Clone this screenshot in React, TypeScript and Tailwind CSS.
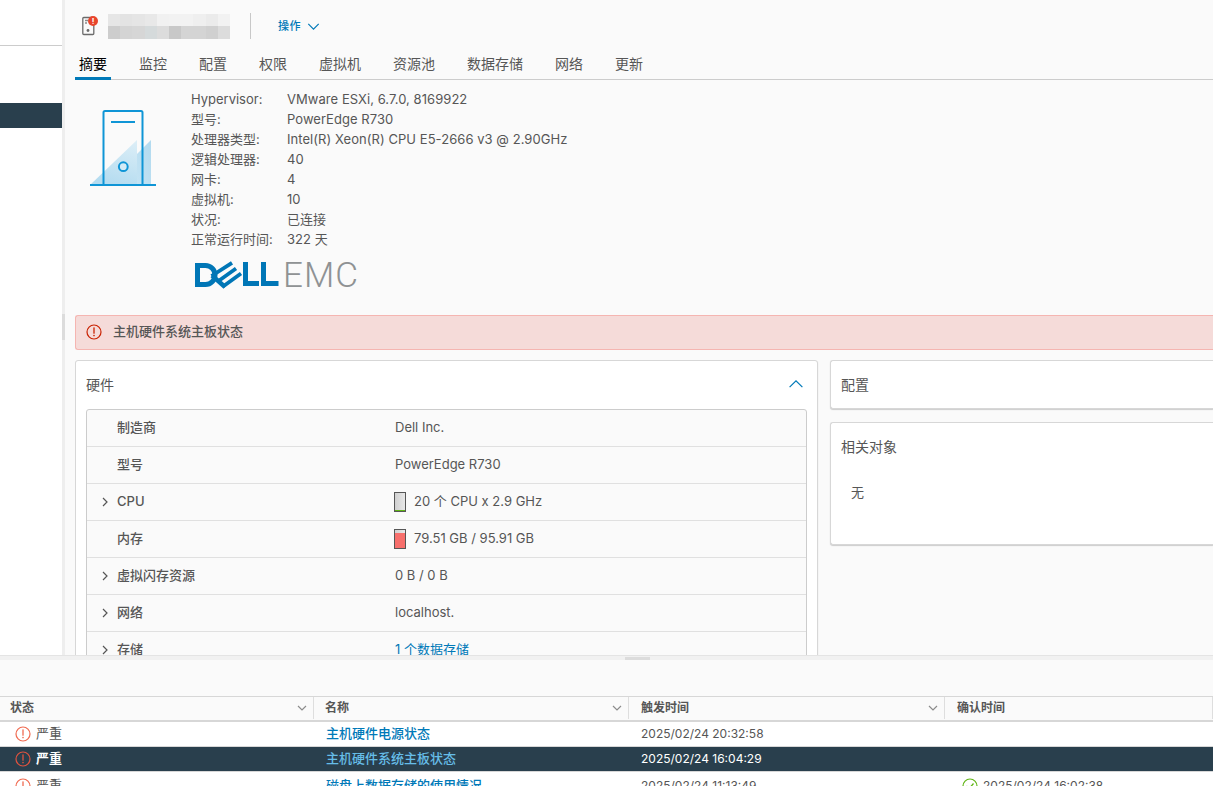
import React from 'react';

const latin = "font-['Inter','Noto_Sans_CJK_SC',sans-serif]";

const tabs = ['摘要', '监控', '配置', '权限', '虚拟机', '资源池', '数据存储', '网络', '更新'];

const summary = [
  ['Hypervisor:', 'VMware ESXi, 6.7.0, 8169922'],
  ['型号:', 'PowerEdge R730'],
  ['处理器类型:', 'Intel(R) Xeon(R) CPU E5-2666 v3 @ 2.90GHz'],
  ['逻辑处理器:', '40'],
  ['网卡:', '4'],
  ['虚拟机:', '10'],
  ['状况:', '已连接'],
  ['正常运行时间:', '322 天'],
];

// Blurred-out host name in the header
const mosaic = [
  ['#e6e6e6', '#e3e3e3', '#e5e5e5', '#e8e8e8', '#f1f1f1', '#f2f2f2', '#f2f2f2', '#efefef', '#ebebeb', '#f2f2f2'],
  ['#cdcdcd', '#d4d4d4', '#d6d6d6', '#d5dadb', '#dcdcdc', '#c8c8c8', '#d4d4d4', '#d4d4d4', '#d0d0d0', '#dcdcdc'],
];

const ErrorIcon = ({ size = 16, color = '#c92100' }: { size?: number; color?: string }) => (
  <svg width={size} height={size} viewBox="0 0 16 16" fill="none" className="shrink-0">
    <circle cx="8" cy="8" r="7" stroke={color} strokeWidth="1.2" />
    <path d="M8 3.8v5.4" stroke={color} strokeWidth="1.3" strokeLinecap="round" />
    <circle cx="8" cy="11.6" r="0.8" fill={color} />
  </svg>
);

const Chevron = ({ dir = 'right', color = '#565656', size = 10 }: { dir?: string; color?: string; size?: number }) => {
  const d = dir === 'right' ? 'M3 1l4 4-4 4' : dir === 'down' ? 'M1 3l4 4 4-4' : 'M1 7l4-4 4 4';
  return (
    <svg width={size} height={size} viewBox="0 0 10 10" fill="none" className="shrink-0">
      <path d={d} stroke={color} strokeWidth={12 / size} />
    </svg>
  );
};

const HostIcon = () => (
  <svg width="66" height="76" viewBox="0 0 66 76" fill="none">
    <defs>
      <linearGradient id="fade" x1="0.9" y1="0" x2="0.6" y2="1">
        <stop offset="0" stopColor="#dcEEf7" />
        <stop offset="1" stopColor="#b5dcf0" />
      </linearGradient>
      <linearGradient id="fade2" x1="1" y1="0" x2="0" y2="1">
        <stop offset="0" stopColor="#b2daef" />
        <stop offset="1" stopColor="#c4e3f3" />
      </linearGradient>
    </defs>
    <path d="M0 75 L47 30 V75 Z" fill="url(#fade)" />
    <path d="M47 44 L61 30 V75 H47 Z" fill="url(#fade2)" />
    <path d="M13.5 75V2.5a1.5 1.5 0 0 1 1.5-1.5h36a1.5 1.5 0 0 1 1.5 1.5V75" stroke="#0f95d6" strokeWidth="2" />
    <path d="M21 12h24" stroke="#0f95d6" strokeWidth="2" />
    <circle cx="33.3" cy="56.7" r="4.4" stroke="#0f95d6" strokeWidth="2" fill="#d4ebf6" />
    <path d="M0 75h66" stroke="#0f95d6" strokeWidth="2" />
  </svg>
);

const DellLogo = () => (
  <svg width="84" height="29" viewBox="0 0 84 29" fill="none" className="shrink-0">
    <g stroke="#0076b6" strokeWidth="5">
      <path d="M2.5 4.5h8a9.5 9.5 0 0 1 0 19h-8z" />
      <path d="M17 14.5 L30 26" strokeWidth="4.4" />
      <path d="M16.5 15 L37 1.8 M23.5 20 L41 7.5 M28 25.5 L46 12.5" strokeWidth="3.8" />
      <path d="M50.5 1V22.5H64" />
      <path d="M68.5 1V22.5H83.5" />
    </g>
  </svg>
);

const Bar = ({ fill, green }: { fill: number; green?: boolean }) => (
  <div className="-ml-px mr-2 flex h-[20px] w-[12px] shrink-0 flex-col justify-end border border-[#565656] bg-gradient-to-r from-[#d0d0d0] to-[#e8e8e8]">
    {green ? <div className="h-[1px] bg-[#60b515]" /> : <div className="bg-[#f76f6c]" style={{ height: fill }} />}
  </div>
);

const rows: { label: string; value: React.ReactNode; expand?: boolean }[] = [
  { label: '制造商', value: 'Dell Inc.' },
  { label: '型号', value: 'PowerEdge R730' },
  { label: 'CPU', expand: true, value: <><Bar fill={1} green /><span>20 个 CPU x 2.9 GHz</span></> },
  { label: '内存', value: <><Bar fill={15} /><span>79.51 GB / 95.91 GB</span></> },
  { label: '虚拟闪存资源', expand: true, value: '0 B / 0 B' },
  { label: '网络', expand: true, value: 'localhost.' },
  { label: '存储', expand: true, value: <span className="text-[#0079b8]">1 个数据存储</span> },
];

const columns = [
  { title: '状态', width: 'w-[314px] pl-[10px]' },
  { title: '名称', width: 'w-[315px] pl-[11px]' },
  { title: '触发时间', width: 'w-[316px] pl-[12px]' },
  { title: '确认时间', width: 'flex-1 pl-[12px]' },
];

const alarms = [
  { name: '主机硬件电源状态', time: '2025/02/24 20:32:58', ack: '' },
  { name: '主机硬件系统主板状态', time: '2025/02/24 16:04:29', ack: '', selected: true },
  { name: '磁盘上数据存储的使用情况', time: '2025/02/24 11:13:49', ack: '2025/02/24 16:02:38' },
];

export default function App() {
  return (
    <div className={`flex h-[786px] w-[1213px] flex-col overflow-hidden bg-white text-[13px] text-[#565656] ${latin}`}>
      <div className="flex h-[655px] shrink-0">
        {/* Left tree */}
        <aside className="w-[62px] shrink-0 bg-white">
          <div className="h-[46px] border-b border-[#ccc]" />
          <div className="mt-[57px] h-[25px] bg-[#293f4d]" />
        </aside>
        <div className="flex w-[13px] shrink-0 bg-[#fafafa]">
          <div className="w-[3px] bg-[#eeeeee]">
            <div className="mt-[314px] h-[26px] bg-[#dcdcdc]" />
          </div>
        </div>

        {/* Main pane */}
        <main className="min-w-0 flex-1 overflow-hidden bg-[#fafafa]">
          <div className="flex h-[52px] items-center pl-[7px]">
            <span className="relative flex h-[20px] w-[17px] shrink-0">
              <svg width="13" height="20" viewBox="0 0 13 20" fill="none">
                <rect x="0.8" y="1.5" width="11" height="17" rx="1" stroke="#6b6b6b" strokeWidth="1.3" />
                <path d="M3 4.5h3M3 7h2" stroke="#8a8a8a" strokeWidth="1.3" />
                <circle cx="6" cy="14.5" r="1.4" fill="#6b6b6b" />
              </svg>
              <span className="absolute left-[6px] top-0 h-[10px] w-[10px] rounded-full bg-[#e8452c] text-center text-[8px] font-bold leading-[10px] text-white">!</span>
            </span>
            <div className="ml-[9px] grid h-[25px] w-[122px] grid-cols-10 blur-[0.6px]">
              {mosaic.flat().map((c, i) => (
                <div key={i} style={{ backgroundColor: c }} />
              ))}
            </div>
            <div className="ml-[20px] h-[26px] w-px bg-[#c8c8c8]" />
            <span className="ml-[27px] pt-[1px] text-[11px] font-medium tracking-[0.5px] text-[#0079b8]">操作</span>
            <span className="ml-[6px] pt-[1px]"><Chevron dir="down" color="#0079b8" size={13} /></span>
          </div>

          <nav className="flex h-[28px] gap-[24px] border-b border-[#ccc] text-[14px] leading-[24px]">
            {tabs.map((t, i) => (
              <div key={t} className={`h-[28px] px-[4px] ${i === 0 ? 'border-b-[3px] border-[#0079b8] text-[#000]' : 'text-[#565656]'}`}>
                {t}
              </div>
            ))}
          </nav>

          {/* Host summary */}
          <section className="flex h-[235px] pl-[15px] pt-[9px]">
            <div className="w-[101px] shrink-0 pt-[21px]"><HostIcon /></div>
            <div>
              <div className="grid grid-cols-[96px_auto] leading-[20px]">
                {summary.map(([k, v]) => (
                  <React.Fragment key={k}>
                    <div>{k}</div>
                    <div className="tracking-[0.05px]">{v}</div>
                  </React.Fragment>
                ))}
              </div>
              <div className="mt-[12px] flex items-center pl-[4px]">
                <DellLogo />
                <span className="ml-[4px] font-['Roboto',sans-serif] text-[35px] leading-[29px] font-light tracking-[1px] text-[#8f9294]">EMC</span>
              </div>
            </div>
          </section>

          <div className="flex h-[35px] items-center gap-[11px] rounded-l-[3px] border border-r-0 border-[#f5b5b1] bg-[#f5dbd9] pb-[1px] pl-[10px] text-[13px] font-medium">
            <ErrorIcon />
            <span>主机硬件系统主板状态</span>
          </div>

          <div className="mt-[10px] flex items-start gap-[12px]">
            <section className="h-[400px] w-[743px] shrink-0 rounded-[3px] border border-[#d7d7d7] bg-white px-[10px] shadow-[0_1px_1px_#ccc]">
              <div className="flex h-[48px] items-center justify-between pb-[2px] pr-[3px] text-[14px]">
                <span>硬件</span>
                <Chevron dir="up" color="#0079b8" size={16} />
              </div>
              <div className="rounded-[3px] border border-[#ccc] bg-[#fafafa]">
                {rows.map((r) => (
                  <div key={r.label} className="flex h-[37px] items-center border-b border-[#e0e0e0]">
                    <div className={`flex w-[308px] shrink-0 items-center font-medium ${r.expand ? 'gap-[7px] pl-[13px]' : 'pl-[30px]'}`}>
                      {r.expand && <Chevron />}
                      <span>{r.label}</span>
                    </div>
                    <div className="flex items-center">{r.value}</div>
                  </div>
                ))}
              </div>
            </section>

            <div className="flex min-w-0 flex-1 flex-col gap-[13px]">
              <section className="flex h-[49px] items-center rounded-l-[3px] border border-r-0 border-[#d7d7d7] bg-white pl-[10px] text-[14px] shadow-[0_1px_1px_#ccc]">
                配置
              </section>
              <section className="h-[123px] rounded-l-[3px] border border-r-0 border-[#d7d7d7] bg-white pl-[10px] pt-[14px] shadow-[0_1px_1px_#ccc]">
                <div className="text-[14px] leading-[20px]">相关对象</div>
                <div className="mt-[25px] pl-[10px] leading-[20px]">无</div>
              </section>
            </div>
          </div>
        </main>
      </div>

      {/* Splitter */}
      <div className="flex h-[5px] shrink-0 justify-center border-t border-[#e4e4e4] bg-[#f1f1f1] pl-[62px]">
        <div className="mt-[1px] h-[3px] w-[25px] bg-[#dcdcdc]" />
      </div>

      {/* Alarm panel */}
      <div className="h-[36px] shrink-0 bg-[#fafafa]" />
      <div className="flex h-[26px] shrink-0 border-y border-b-2 border-[#d7d7d7] bg-[#fafafa] pb-[1px] text-[12px] font-bold">
        {columns.map((c) => (
          <div key={c.title} className={`flex items-center justify-between border-r border-[#dedede] pr-[6px] ${c.width}`}>
            <span>{c.title}</span>
            {c.title !== '确认时间' && <Chevron dir="down" color="#8c8c8c" size={10} />}
          </div>
        ))}
      </div>
      {alarms.map((a) => (
        <div key={a.name} className={`flex h-[25px] shrink-0 items-center border-b border-[#d7d7d7] pb-[1px] text-[13px] last:h-[28px] last:pb-0 ${a.selected ? 'bg-[#293f4d] text-white' : 'bg-white'}`}>
          <div className="flex w-[313px] items-center gap-[5px] pl-[15px]">
            <ErrorIcon color={a.selected ? '#e0533f' : '#f06a50'} />
            <span className={a.selected ? 'font-bold' : ''}>严重</span>
          </div>
          <div className={`w-[315px] pl-[13px] font-medium ${a.selected ? 'text-[#66bde8]' : 'text-[#0079b8]'}`}>{a.name}</div>
          <div className="w-[316px] pl-[13px] text-[12px]">{a.time}</div>
          <div className="flex flex-1 items-center gap-[5px] pl-[18px] text-[12px]">
            {a.ack && (
              <>
                <svg width="16" height="16" viewBox="0 0 16 16" fill="none">
                  <circle cx="8" cy="8" r="7" stroke="#60b515" strokeWidth="1.2" />
                  <path d="M4.5 8l2.5 2.8 4.5-5.3" stroke="#60b515" strokeWidth="1.3" />
                </svg>
                <span>{a.ack}</span>
              </>
            )}
          </div>
        </div>
      ))}
    </div>
  );
}
